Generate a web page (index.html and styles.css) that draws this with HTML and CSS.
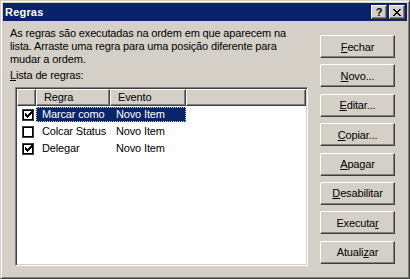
FILE: index.html
```
<!DOCTYPE html>
<html lang="pt">

<head>
  <meta charset="UTF-8">
  <title>Regras</title>
  <link rel="stylesheet" href="styles.css">
</head>

<body>
  <div class="window">
    <div class="titlebar">
      <span class="title">Regras</span>
      <div class="caption-btns">
        <button class="cap-btn cap-help">?</button>
        <button class="cap-btn">
          <svg width="8" height="7" viewBox="0 0 8 7" shape-rendering="crispEdges">
            <path d="M0 0h2v1h-2zM6 0h2v1h-2zM1 1h2v1h-2zM5 1h2v1h-2zM2 2h4v1h-4zM3 3h2v1h-2zM2 4h4v1h-4zM1 5h2v1h-2zM5 5h2v1h-2zM0 6h2v1h-2zM6 6h2v1h-2z" fill="#000"/>
          </svg>
        </button>
      </div>
    </div>

    <div class="content">
      <div class="main">
        <p class="intro">As regras são executadas na ordem em que aparecem na lista. Arraste uma regra para uma posição diferente para mudar a ordem.</p>
        <div class="list-label"><u>L</u>ista de regras:</div>

        <div class="listview">
          <div class="lv-header">
            <div class="hd"></div>
            <div class="hd">Regra</div>
            <div class="hd">Evento</div>
            <div class="hd hd-fill"></div>
          </div>

          <div class="lv-row selected">
            <span class="check checked">
              <svg width="7" height="7" viewBox="0 0 7 7" shape-rendering="crispEdges"><path d="M0 2h1v3h-1zM1 3h1v3h-1zM2 4h1v3h-1zM3 3h1v3h-1zM4 2h1v3h-1zM5 1h1v3h-1zM6 0h1v3h-1z" fill="#000"/></svg>
            </span>
            <span class="cells"><span class="cell">Marcar como</span><span class="cell">Novo Item</span></span>
          </div>
          <div class="lv-row">
            <span class="check"></span>
            <span class="cells"><span class="cell">Colcar Status</span><span class="cell">Novo Item</span></span>
          </div>
          <div class="lv-row">
            <span class="check checked">
              <svg width="7" height="7" viewBox="0 0 7 7" shape-rendering="crispEdges"><path d="M0 2h1v3h-1zM1 3h1v3h-1zM2 4h1v3h-1zM3 3h1v3h-1zM4 2h1v3h-1zM5 1h1v3h-1zM6 0h1v3h-1z" fill="#000"/></svg>
            </span>
            <span class="cells"><span class="cell">Delegar</span><span class="cell">Novo Item</span></span>
          </div>
        </div>
      </div>

      <div class="buttons">
        <button class="btn"><u>F</u>echar</button>
        <button class="btn"><u>N</u>ovo...</button>
        <button class="btn"><u>E</u>ditar...</button>
        <button class="btn"><u>C</u>opiar...</button>
        <button class="btn"><u>A</u>pagar</button>
        <button class="btn"><u>D</u>esabilitar</button>
        <button class="btn">Executa<u>r</u></button>
        <button class="btn">Atuali<u>z</u>ar</button>
      </div>
    </div>
  </div>
</body>

</html>
```

FILE: styles.css
```
body {
  margin: 0;
  padding: 0;
  background: #d4d0c8;
  font-family: 'Liberation Sans', Arial, sans-serif;
  font-size: 11px;
  letter-spacing: -0.15px;
  color: #000;
}

.window {
  width: 410px;
  height: 279px;
  box-sizing: border-box;
  background: #d4d0c8;
  border: 1px solid;
  border-color: #d4d0c8 #404040 #404040 #d4d0c8;
  box-shadow: inset 1px 1px #fff, inset -1px -1px #808080;
  padding: 2px;
}

.titlebar {
  height: 18px;
  display: flex;
  align-items: center;
  justify-content: space-between;
  background: #0a216c;
  padding: 0 2px;
}

.title {
  color: #fff;
  font-weight: bold;
  font-size: 11px;
  letter-spacing: 0.2px;
}

.caption-btns {
  display: flex;
  gap: 2px;
}

.cap-btn {
  width: 16px;
  height: 14px;
  padding: 0;
  margin: 0;
  display: flex;
  align-items: center;
  justify-content: center;
  background: #d4d0c8;
  border: 1px solid;
  border-color: #fff #404040 #404040 #fff;
  box-shadow: inset -1px -1px #808080;
  font-family: 'Liberation Sans', Arial, sans-serif;
  font-weight: bold;
  font-size: 11px;
  line-height: 12px;
  color: #000;
}

.content {
  display: flex;
  gap: 12px;
  padding: 6px 12px 0 7px;
}

.main {
  width: 298px;
}

.intro {
  margin: 0;
  width: 290px;
  line-height: 13px;
}

.list-label {
  margin-top: 3px;
  line-height: 13px;
}

.listview {
  margin: 5px 0 0 5px;
  width: 293px;
  height: 179px;
  box-sizing: border-box;
  background: #fff;
  border: 1px solid;
  border-color: #808080 #fff #fff #808080;
  box-shadow: inset 1px 1px #404040, inset -1px -1px #d4d0c8;
  padding: 1px;
}

.lv-header {
  display: grid;
  grid-template-columns: 19px 74px 76px 1fr;
  height: 17px;
}

.hd {
  box-sizing: border-box;
  background: #d4d0c8;
  border: 1px solid;
  border-color: #fff #404040 #404040 #fff;
  box-shadow: inset -1px -1px #808080;
  padding-left: 7px;
  line-height: 14px;
}

.lv-row {
  display: flex;
  align-items: center;
  height: 17px;
}

.check {
  width: 12px;
  height: 12px;
  box-sizing: border-box;
  margin: 0 1px 0 5px;
  border: 1px solid #404040;
  box-shadow: inset 0 0 0 1px #000;
  background: #fff;
  display: flex;
  align-items: center;
  justify-content: center;
}

.cells {
  display: grid;
  grid-template-columns: 74px 76px;
  margin-left: 1px;
  height: 15px;
  line-height: 15px;
}

.cell {
  padding-left: 6px;
  white-space: nowrap;
}

.selected .cells {
  background: #0a246a;
  color: #fff;
  outline: 1px dotted #c8c4bc;
  outline-offset: -1px;
}

.buttons {
  display: flex;
  flex-direction: column;
  gap: 6.4px;
  padding-top: 8px;
}

.btn {
  width: 75px;
  height: 23px;
  padding: 0;
  margin: 0;
  background: #d4d0c8;
  border: 1px solid;
  border-color: #fff #404040 #404040 #fff;
  box-shadow: inset -1px -1px #808080;
  font-family: 'Liberation Sans', Arial, sans-serif;
  font-size: 11px;
  letter-spacing: -0.15px;
  color: #000;
}
```
